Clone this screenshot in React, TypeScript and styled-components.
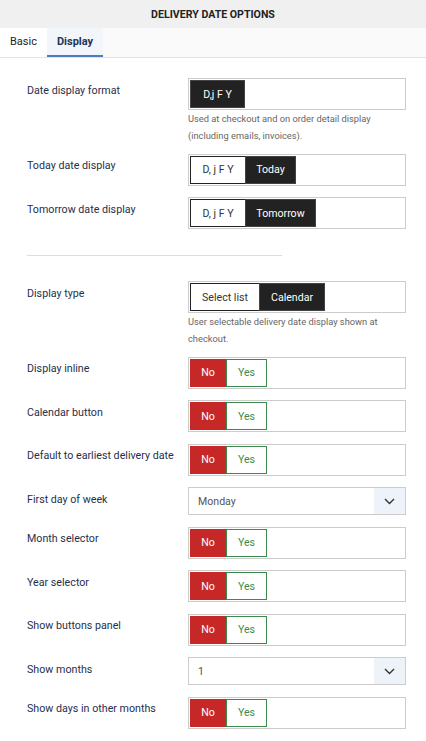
import React from "react";
import styled, { createGlobalStyle } from "styled-components";

const Global = createGlobalStyle`
  html, body { margin: 0; padding: 0; background: #fff; }
  body { font-family: Roboto, "Noto Sans", "Liberation Sans", sans-serif; -webkit-font-smoothing: antialiased; }
  * { box-sizing: border-box; }
`;

const Page = styled.div`
  width: 426px;
  background: #fff;
`;

const Header = styled.div`
  height: 28px;
  background: #f0f0f0;
  display: flex;
  align-items: center;
  justify-content: center;
  font-size: 10.6px;
  font-weight: 700;
  color: #222;
`;

const TabBar = styled.div`
  display: flex;
  height: 30px;
  background: #fafafa;
  border-bottom: 1px solid #dfe3ea;
`;

const Tab = styled.div<{ $active?: boolean }>`
  display: flex;
  align-items: center;
  padding: 0 10px;
  font-size: 11px;
  font-weight: ${(p) => (p.$active ? 700 : 400)};
  color: ${(p) => (p.$active ? "#1f3557" : "#222")};
  background: ${(p) => (p.$active ? "#f2f5f9" : "#fff")};
  border-bottom: 2px solid ${(p) => (p.$active ? "#4a7cc2" : "transparent")};
  width: ${(p) => (p.$active ? "56px" : "47px")};
  justify-content: ${(p) => (p.$active ? "center" : "flex-start")};
`;

const Content = styled.div`
  padding: 20px 20px 10px 27px;
`;

const Row = styled.div`
  display: grid;
  grid-template-columns: 161px 218px;
  align-items: start;
  margin-bottom: 11.5px;
`;

const Label = styled.div`
  font-size: 10.7px;
  color: #1f2f4d;
  padding-top: 5.5px;
  line-height: 13px;
`;

const Control = styled.div``;

const Box = styled.div`
  height: 32px;
  border: 1px solid #ccc;
  padding: 1px;
  display: flex;
  align-items: stretch;
`;

const Seg = styled.div<{ $dark?: boolean; $w: number }>`
  width: ${(p) => p.$w}px;
  display: flex;
  align-items: center;
  justify-content: center;
  font-size: 10.6px;
  background: ${(p) => (p.$dark ? "#222" : "#fff")};
  color: ${(p) => (p.$dark ? "#fff" : "#333")};
  border: 1px solid ${(p) => (p.$dark ? "#444" : "#222")};
  ${(p) => (p.$dark ? "" : "border-right: none;")}
`;

const NoBtn = styled.div`
  width: 36px;
  display: flex;
  align-items: center;
  justify-content: center;
  font-size: 10.6px;
  background: #c62828;
  color: #fff;
  border: 1px solid #c62828;
`;

const YesBtn = styled.div`
  width: 41px;
  display: flex;
  align-items: center;
  justify-content: center;
  font-size: 10.6px;
  background: #fff;
  color: #3b8a4c;
  border: 1px solid #3b8a4c;
`;

const Help = styled.div`
  font-size: 9.3px;
  color: #666;
  line-height: 17px;
  margin-top: 0px;
  margin-bottom: -2px;
`;

const Select = styled.div`
  height: 28px;
  border: 1px solid #ccc;
  display: flex;
  align-items: stretch;
`;

const SelectValue = styled.div`
  flex: 1;
  display: flex;
  align-items: center;
  padding-left: 9px;
  font-size: 10.6px;
  color: #555;
`;

const SelectArrow = styled.div`
  width: 31px;
  background: #eef3fa;
  display: flex;
  align-items: center;
  justify-content: center;
`;

const Divider = styled.hr`
  border: none;
  border-top: 1px solid #ddd;
  width: 255px;
  margin: 26px 0 25px 0;
`;

const Toggle = () => (
  <Box>
    <NoBtn>No</NoBtn>
    <YesBtn>Yes</YesBtn>
  </Box>
);

const Chevron = () => (
  <svg width="11" height="7" viewBox="0 0 11 7">
    <path d="M1 1 L5.5 5.5 L10 1" fill="none" stroke="#333" strokeWidth="1.4" />
  </svg>
);

const Dropdown = ({ value }: { value: string }) => (
  <Select>
    <SelectValue>{value}</SelectValue>
    <SelectArrow>
      <Chevron />
    </SelectArrow>
  </Select>
);

const toggles1 = ["Display inline", "Calendar button", "Default to earliest delivery date"];
const toggles2 = ["Month selector", "Year selector", "Show buttons panel"];

export default function App() {
  return (
    <Page>
      <Global />
      <Header>DELIVERY DATE OPTIONS</Header>
      <TabBar>
        <Tab>Basic</Tab>
        <Tab $active>Display</Tab>
      </TabBar>
      <Content>
        <Row>
          <Label>Date display format</Label>
          <Control>
            <Box>
              <Seg $dark $w={55}>D,j F Y</Seg>
            </Box>
            <Help>
              Used at checkout and on order detail display
              <br />
              (including emails, invoices).
            </Help>
          </Control>
        </Row>
        <Row>
          <Label>Today date display</Label>
          <Box>
            <Seg $w={55}>D, j F Y</Seg>
            <Seg $dark $w={51}>Today</Seg>
          </Box>
        </Row>
        <Row>
          <Label>Tomorrow date display</Label>
          <Box>
            <Seg $w={55}>D, j F Y</Seg>
            <Seg $dark $w={71}>Tomorrow</Seg>
          </Box>
        </Row>
        <Divider />
        <Row>
          <Label>Display type</Label>
          <Control>
            <Box>
              <Seg $w={69}>Select list</Seg>
              <Seg $dark $w={66}>Calendar</Seg>
            </Box>
            <Help>
              User selectable delivery date display shown at
              <br />
              checkout.
            </Help>
          </Control>
        </Row>
        {toggles1.map((t) => (
          <Row key={t}>
            <Label>{t}</Label>
            <Toggle />
          </Row>
        ))}
        <Row>
          <Label>First day of week</Label>
          <Dropdown value="Monday" />
        </Row>
        {toggles2.map((t) => (
          <Row key={t}>
            <Label>{t}</Label>
            <Toggle />
          </Row>
        ))}
        <Row>
          <Label>Show months</Label>
          <Dropdown value="1" />
        </Row>
        <Row>
          <Label>Show days in other months</Label>
          <Toggle />
        </Row>
      </Content>
    </Page>
  );
}
